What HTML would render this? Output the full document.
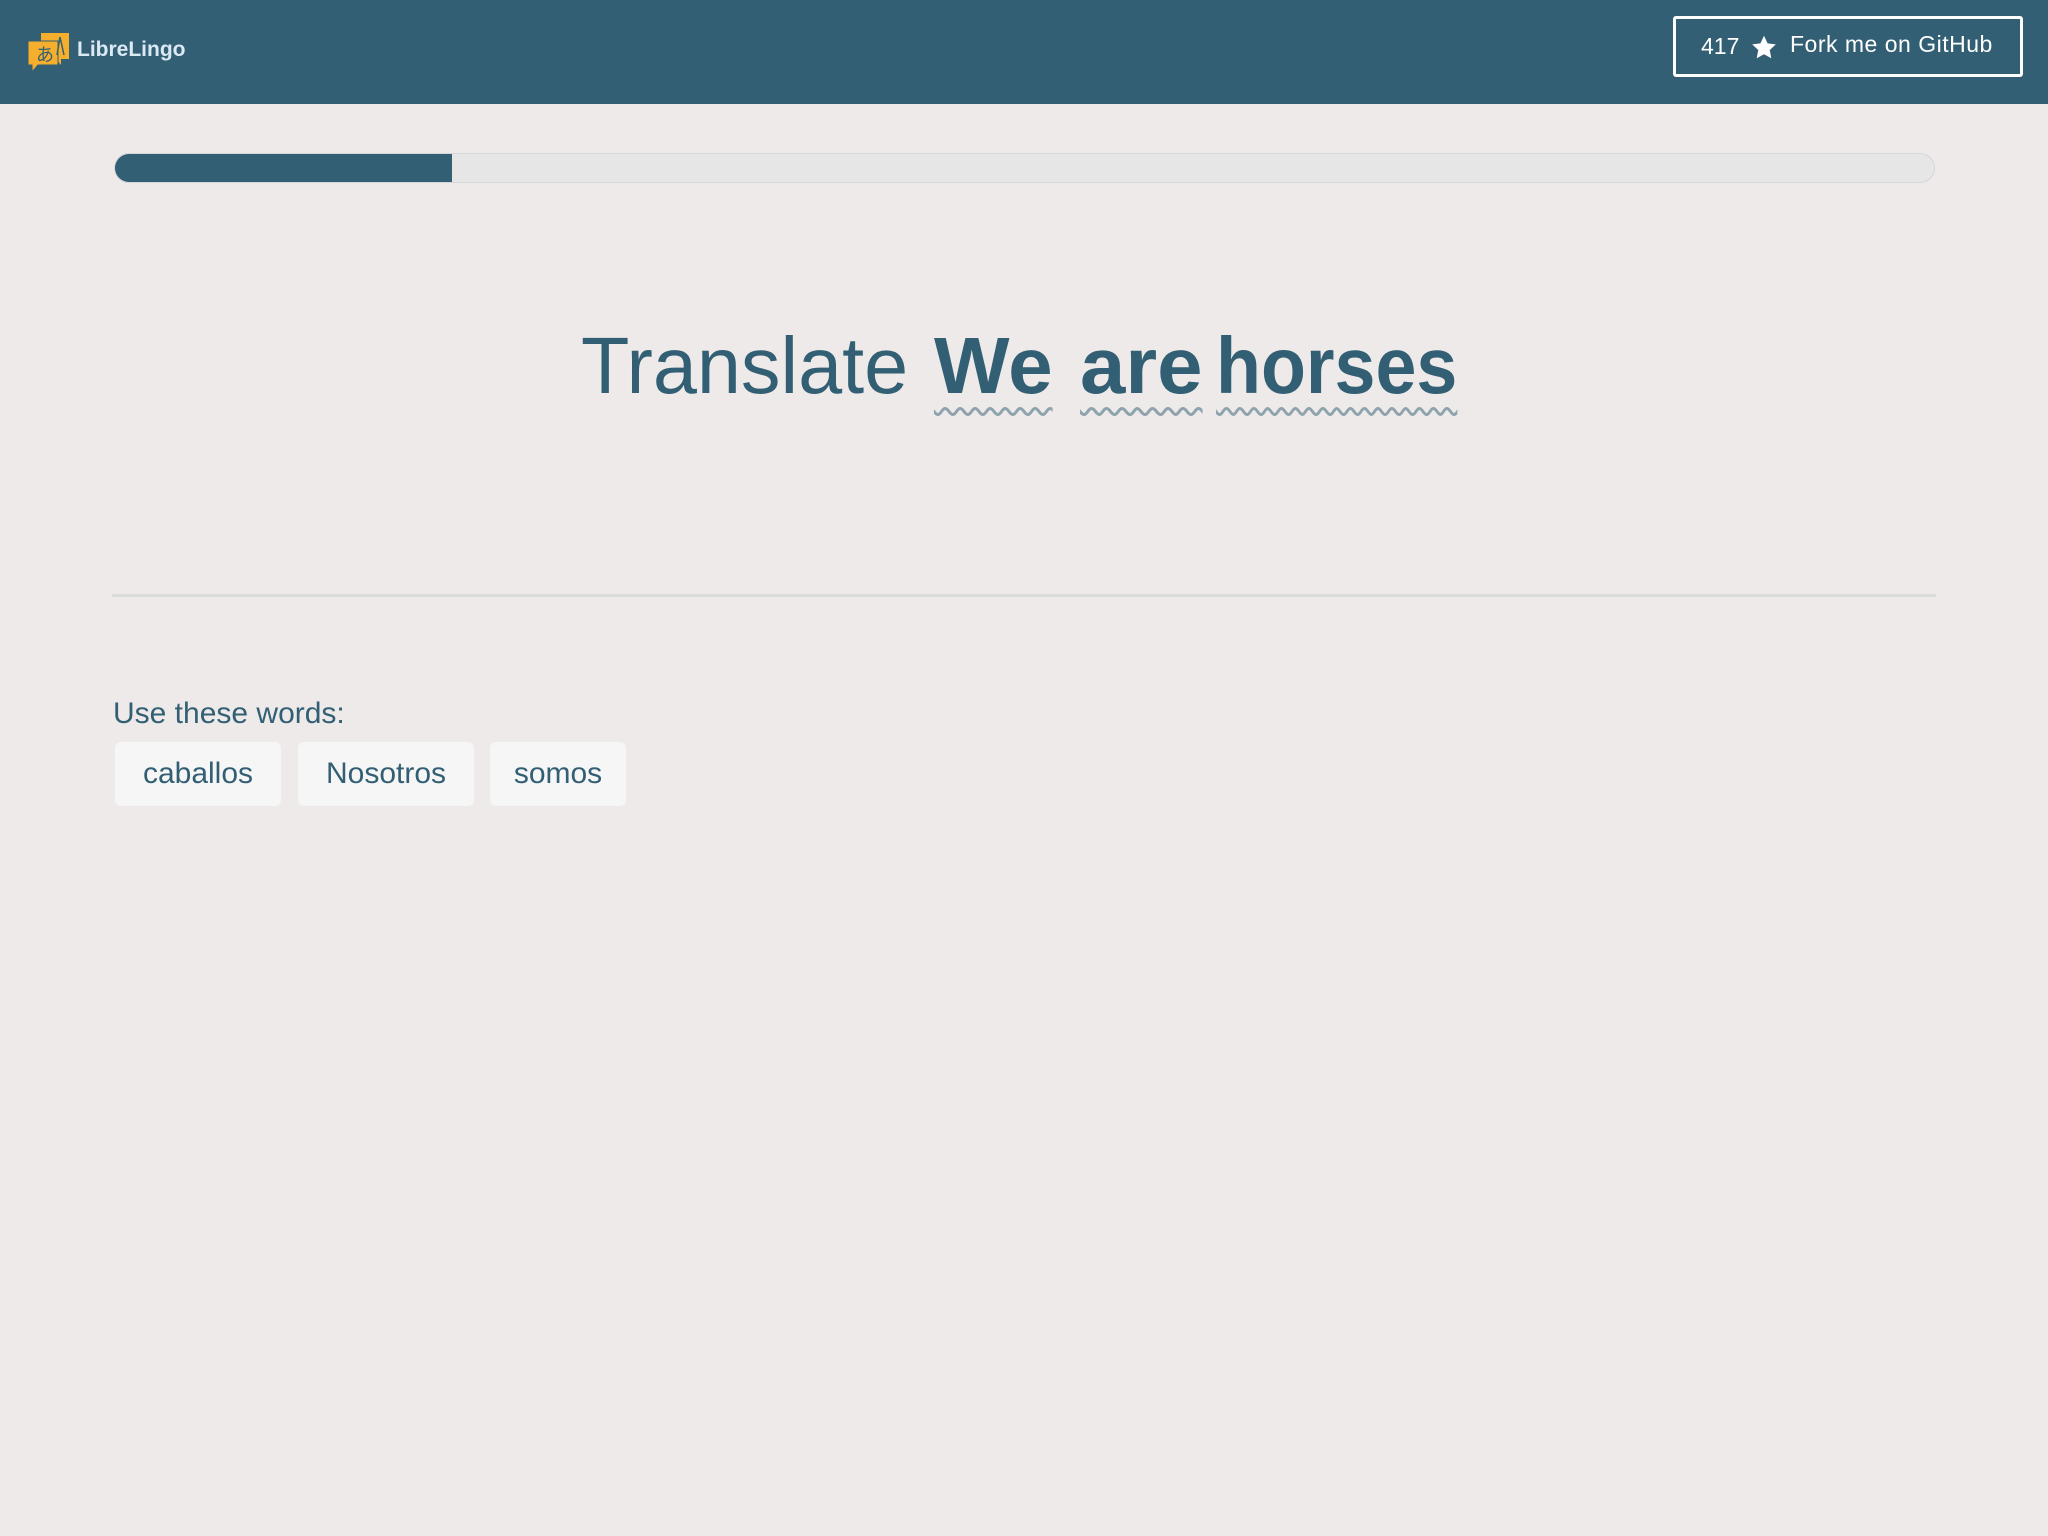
<!DOCTYPE html>
<html><head><meta charset="utf-8"><style>
body{margin:0;width:2048px;height:1536px;background:#eeeae9;font-family:"Liberation Sans",sans-serif;color:#325f74;position:relative;overflow:hidden}
.hdr{position:absolute;left:0;top:0;width:2048px;height:104px;background:#325f74}
.logo{position:absolute;left:77px;top:38px;color:#dbe9f5;font-weight:bold;font-size:21px}
.gh{position:absolute;left:1673px;top:16px;width:344px;height:55px;border:3px solid #fff;border-radius:3px;color:#fff;font-size:23px}
.bar{position:absolute;left:114px;top:153px;width:1819px;height:28px;border:1px solid #d6d6d6;border-radius:15px;background:#e6e6e6;overflow:hidden}
.bar div{width:337px;height:100%;background:#325f74}
.w{position:absolute;top:318px;font-size:80px;white-space:nowrap;transform-origin:left;line-height:96px}
.b{font-weight:bold;text-decoration:underline wavy #8fa3ad;text-decoration-thickness:3px;text-underline-offset:14px}
.hr{position:absolute;left:112px;top:594px;width:1824px;height:3px;background:#dcdcdc}
.use{position:absolute;left:113px;top:697px;font-size:30px}
.chip{position:absolute;top:742px;height:64px;background:#f6f6f6;border-radius:6px;font-size:30px;line-height:64px;text-align:center}
</style></head><body>
<div class="hdr">
<svg style="position:absolute;left:27px;top:32px" width="44" height="42" viewBox="0 0 44 42">
<path d="M14 1h28v26h-8v6l-5-6H14z" fill="#f6ae2d"/>
<path d="M1 9h30v24H11l-6 7v-7H1z" fill="#f6ae2d" stroke="#325f74" stroke-width="1"/>
<text x="9" y="29" font-size="18" fill="#325f74" font-family="Noto Sans CJK JP,sans-serif">あ</text>
<path d="M33 5l-3 18M33 5l4 18" stroke="#325f74" stroke-width="1.5" fill="none"/>
</svg>
<div class="logo">LibreLingo</div>
<div class="gh"><span style="position:absolute;left:25px;top:14px">417</span>
<svg style="position:absolute;left:74px;top:15px" width="28" height="27" viewBox="0 0 24 24"><path d="M12 1.5l3.2 6.8 7.3.9-5.4 5 1.4 7.3L12 18l-6.5 3.5 1.4-7.3-5.4-5 7.3-.9z" fill="#fff"/></svg>
<span style="position:absolute;left:114px;top:12px;letter-spacing:0.5px">Fork me on GitHub</span></div>
</div>
<div class="bar"><div></div></div>
<div class="w" style="left:581px;transform:scaleX(0.99)">Translate</div>
<div class="w b" style="left:934px;transform:scaleX(1.0)">We</div>
<div class="w b" style="left:1080px;transform:scaleX(1.02)">are</div>
<div class="w b" style="left:1216px;transform:scaleX(0.92)">horses</div>
<div class="hr"></div>
<div class="use">Use these words:</div>
<div class="chip" style="left:115px;width:166px">caballos</div>
<div class="chip" style="left:298px;width:176px">Nosotros</div>
<div class="chip" style="left:490px;width:136px">somos</div>
</body></html>
